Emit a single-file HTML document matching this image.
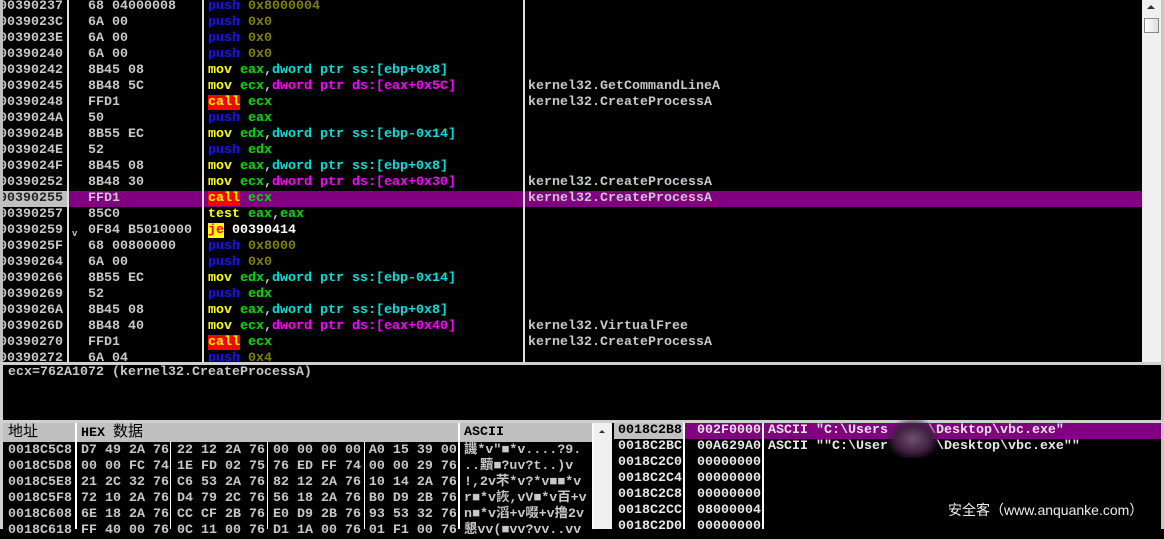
<!DOCTYPE html><html><head><meta charset="utf-8"><style>
body{margin:0;width:1164px;height:529px;background:#000;overflow:hidden;position:relative;font-family:"Liberation Mono","Noto Sans CJK SC",monospace;font-size:13.33px;font-weight:bold;color:#c8c8c8}
div{position:absolute;box-sizing:border-box}
.r{height:16px;line-height:16px;white-space:pre;left:0;width:1142px}
.a{position:absolute;left:-1px}.b{position:absolute;left:88px}.d{position:absolute;left:208px}.c{position:absolute;left:528px}
.p{color:#1414ff}.n{color:#808000}.m{color:#ffff00}.g{color:#00e000}.y{color:#00e0e0}.k{color:#ff00ff}.w{color:#fff}
.call{background:#ff0000;color:#ffff00}.je{background:#ffff00;color:#ff0000}
.sel{background:#800080}
.vl{width:2px;background:#e0e0e0}
.h{height:16px;line-height:16px;white-space:pre}
</style></head><body>
<div class="r" style="top:191px"><div style="left:0;top:0;width:67px;height:16px;background:#c0c0c0"></div><div class="sel" style="left:69px;top:0;width:1073px;height:16px"></div></div>
<div style="left:0;top:0;width:3px;height:362px;background:#c0c0c0"></div>
<div class="vl" style="left:67px;top:0;height:362px"></div>
<div class="vl" style="left:202px;top:0;height:362px"></div>
<div class="vl" style="left:523px;top:0;height:362px"></div>
<div class="r" style="top:-1px"><span class="a">00390237</span><span class="b">68 04000008</span><span class="d"><span class="p">push</span> <span class="n">0x8000004</span></span></div>
<div class="r" style="top:15px"><span class="a">0039023C</span><span class="b">6A 00</span><span class="d"><span class="p">push</span> <span class="n">0x0</span></span></div>
<div class="r" style="top:31px"><span class="a">0039023E</span><span class="b">6A 00</span><span class="d"><span class="p">push</span> <span class="n">0x0</span></span></div>
<div class="r" style="top:47px"><span class="a">00390240</span><span class="b">6A 00</span><span class="d"><span class="p">push</span> <span class="n">0x0</span></span></div>
<div class="r" style="top:63px"><span class="a">00390242</span><span class="b">8B45 08</span><span class="d"><span class="m">mov</span> <span class="g">eax</span>,<span class="y">dword ptr ss:[ebp+0x8]</span></span></div>
<div class="r" style="top:79px"><span class="a">00390245</span><span class="b">8B48 5C</span><span class="d"><span class="m">mov</span> <span class="g">ecx</span>,<span class="k">dword ptr ds:[eax+0x5C]</span></span><span class="c">kernel32.GetCommandLineA</span></div>
<div class="r" style="top:95px"><span class="a">00390248</span><span class="b">FFD1</span><span class="d"><span class="call">call</span> <span class="g">ecx</span></span><span class="c">kernel32.CreateProcessA</span></div>
<div class="r" style="top:111px"><span class="a">0039024A</span><span class="b">50</span><span class="d"><span class="p">push</span> <span class="g">eax</span></span></div>
<div class="r" style="top:127px"><span class="a">0039024B</span><span class="b">8B55 EC</span><span class="d"><span class="m">mov</span> <span class="g">edx</span>,<span class="y">dword ptr ss:[ebp-0x14]</span></span></div>
<div class="r" style="top:143px"><span class="a">0039024E</span><span class="b">52</span><span class="d"><span class="p">push</span> <span class="g">edx</span></span></div>
<div class="r" style="top:159px"><span class="a">0039024F</span><span class="b">8B45 08</span><span class="d"><span class="m">mov</span> <span class="g">eax</span>,<span class="y">dword ptr ss:[ebp+0x8]</span></span></div>
<div class="r" style="top:175px"><span class="a">00390252</span><span class="b">8B48 30</span><span class="d"><span class="m">mov</span> <span class="g">ecx</span>,<span class="k">dword ptr ds:[eax+0x30]</span></span><span class="c">kernel32.CreateProcessA</span></div>
<div class="r" style="top:191px"><span class="a" style="color:#222">00390255</span><span class="b">FFD1</span><span class="d"><span class="call">call</span> <span class="g">ecx</span></span><span class="c">kernel32.CreateProcessA</span></div>
<div class="r" style="top:207px"><span class="a">00390257</span><span class="b">85C0</span><span class="d"><span class="m">test</span> <span class="g">eax</span>,<span class="g">eax</span></span></div>
<div class="r" style="top:223px"><span class="a">00390259</span><span style="position:absolute;left:72px;font-size:9px;top:3px">v</span><span class="b">0F84 B5010000</span><span class="d"><span class="je">je</span> <span class="w">00390414</span></span></div>
<div class="r" style="top:239px"><span class="a">0039025F</span><span class="b">68 00800000</span><span class="d"><span class="p">push</span> <span class="n">0x8000</span></span></div>
<div class="r" style="top:255px"><span class="a">00390264</span><span class="b">6A 00</span><span class="d"><span class="p">push</span> <span class="n">0x0</span></span></div>
<div class="r" style="top:271px"><span class="a">00390266</span><span class="b">8B55 EC</span><span class="d"><span class="m">mov</span> <span class="g">edx</span>,<span class="y">dword ptr ss:[ebp-0x14]</span></span></div>
<div class="r" style="top:287px"><span class="a">00390269</span><span class="b">52</span><span class="d"><span class="p">push</span> <span class="g">edx</span></span></div>
<div class="r" style="top:303px"><span class="a">0039026A</span><span class="b">8B45 08</span><span class="d"><span class="m">mov</span> <span class="g">eax</span>,<span class="y">dword ptr ss:[ebp+0x8]</span></span></div>
<div class="r" style="top:319px"><span class="a">0039026D</span><span class="b">8B48 40</span><span class="d"><span class="m">mov</span> <span class="g">ecx</span>,<span class="k">dword ptr ds:[eax+0x40]</span></span><span class="c">kernel32.VirtualFree</span></div>
<div class="r" style="top:335px"><span class="a">00390270</span><span class="b">FFD1</span><span class="d"><span class="call">call</span> <span class="g">ecx</span></span><span class="c">kernel32.CreateProcessA</span></div>
<div class="r" style="top:351px;height:11px;overflow:hidden"><span class="a">00390272</span><span class="b">6A 04</span><span class="d"><span class="p">push</span> <span class="n">0x4</span></span></div>
<div style="left:0;top:0;width:3px;height:362px;background:#c0c0c0"></div>
<div style="left:1142px;top:0;width:19px;height:362px;background:#f0f0f0"></div>
<div style="left:1147px;top:5px;width:0;height:0;border-left:4px solid transparent;border-right:4px solid transparent;border-bottom:4px solid #333"></div>
<div style="left:1144px;top:18px;width:15px;height:15px;border:1px solid #888;background:linear-gradient(90deg,#fff,#ddd)"></div>
<div style="left:1161px;top:0;width:3px;height:529px;background:#c8c8c8"></div>
<div style="left:0;top:362px;width:1164px;height:3px;background:#d0d0d0"></div>
<div style="left:0;top:362px;width:3px;height:167px;background:#d0d0d0"></div>
<div class="h" style="left:8px;top:365px">ecx=762A1072 (kernel32.CreateProcessA)</div>
<div style="left:0;top:420px;width:1164px;height:3px;background:#d0d0d0"></div>
<div style="left:3px;top:423px;width:595px;height:19px;background:#c0c0c0"></div>
<div style="left:75px;top:423px;width:2px;height:106px;background:#fff"></div>
<div style="left:458px;top:423px;width:2px;height:106px;background:#fff"></div>
<div style="left:592px;top:423px;width:2px;height:106px;background:#fff"></div>
<div class="h" style="left:8px;top:424px;color:#000;font-weight:normal;font-size:15px;line-height:18px">地址</div>
<div class="h" style="left:81px;top:424px;color:#000;line-height:18px">HEX <span style="font-weight:normal;font-size:15px">数据</span></div>
<div class="h" style="left:464px;top:424px;color:#000;line-height:18px">ASCII</div>
<div style="left:170px;top:442px;width:1px;height:87px;background:#fff"></div>
<div style="left:267px;top:442px;width:1px;height:87px;background:#fff"></div>
<div style="left:364px;top:442px;width:1px;height:87px;background:#fff"></div>
<div class="h" style="left:8px;top:443px;line-height:16px">0018C5C8
0018C5D8
0018C5E8
0018C5F8
0018C608
0018C618</div>
<div class="h" style="left:81px;top:443px">D7 49 2A 76 22 12 2A 76 00 00 00 00 A0 15 39 00
00 00 FC 74 1E FD 02 75 76 ED FF 74 00 00 29 76
21 2C 32 76 C6 53 2A 76 82 12 2A 76 10 14 2A 76
72 10 2A 76 D4 79 2C 76 56 18 2A 76 B0 D9 2B 76
6E 18 2A 76 CC CF 2B 76 E0 D9 2B 76 93 53 32 76
FF 40 00 76 0C 11 00 76 D1 1A 00 76 01 F1 00 76</div>
<div class="h" style="left:464px;top:443px">譏*v"■*v....?9.
..黷■?uv?t..)v
!,2v芣*v?*v■■*v
r■*v詼,vV■*v百+v
n■*v滔+v啜+v撸2v
懇vv(■vv?vv..vv</div>
<div style="left:594px;top:423px;width:18px;height:106px;background:#f0f0f0"></div>
<div style="left:599px;top:430px;border-left:3px solid transparent;border-right:3px solid transparent;border-bottom:3px solid #333"></div>
<div style="left:612px;top:423px;width:71px;height:106px;background:#000"></div>
<div style="left:614px;top:423px;width:69px;height:16px;background:#c0c0c0"></div>
<div class="sel" style="left:685px;top:423px;width:476px;height:16px"></div>
<div style="left:683px;top:423px;width:2px;height:106px;background:#fff"></div>
<div style="left:762px;top:423px;width:2px;height:106px;background:#fff"></div>
<div class="h" style="left:618px;top:423px;color:#000">0018C2B8</div>
<div class="h" style="left:618px;top:439px;color:#e8e8e8">0018C2BC
0018C2C0
0018C2C4
0018C2C8
0018C2CC
0018C2D0</div>
<div class="h" style="left:697px;top:423px;color:#e8e8e8">002F0000
00A629A0
00000000
00000000
00000000
08000004
00000000</div>
<div class="h" style="left:768px;top:423px;color:#e8e8e8">ASCII "C:\Users     \Desktop\vbc.exe"
ASCII ""C:\User      \Desktop\vbc.exe""</div>
<div style="left:888px;top:420px;width:50px;height:38px;background:radial-gradient(ellipse at center,#705070 0%,#402040 50%,rgba(0,0,0,0) 80%)"></div>
<div class="h" style="left:948px;top:500px;font-family:'Liberation Sans','Noto Sans CJK SC',sans-serif;font-weight:normal;font-size:14px;color:#eee;line-height:20px">安全客（www.anquanke.com）</div>
</body></html>
